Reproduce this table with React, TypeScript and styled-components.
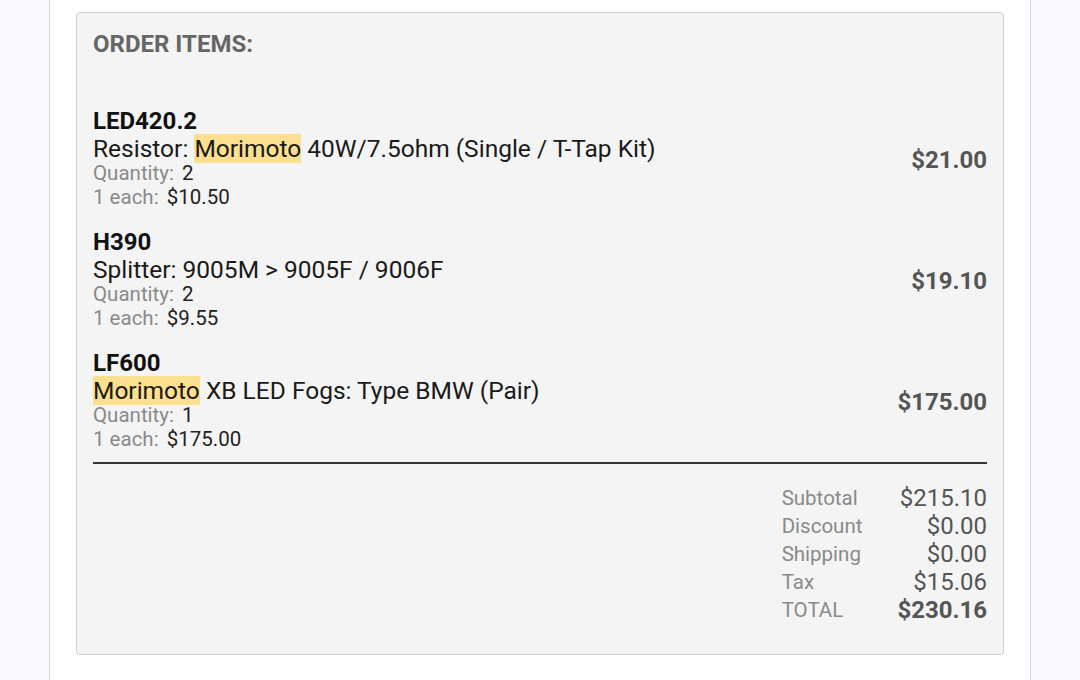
import styled, { createGlobalStyle } from "styled-components";

type Item = {
  sku: string;
  name: (string | { mark: string })[];
  quantity: number;
  each: string;
  total: string;
};

const items: Item[] = [
  {
    sku: "LED420.2",
    name: ["Resistor: ", { mark: "Morimoto" }, " 40W/7.5ohm (Single / T-Tap Kit)"],
    quantity: 2,
    each: "$10.50",
    total: "$21.00",
  },
  {
    sku: "H390",
    name: ["Splitter: 9005M > 9005F / 9006F"],
    quantity: 2,
    each: "$9.55",
    total: "$19.10",
  },
  {
    sku: "LF600",
    name: [{ mark: "Morimoto" }, " XB LED Fogs: Type BMW (Pair)"],
    quantity: 1,
    each: "$175.00",
    total: "$175.00",
  },
];

const totals = [
  { label: "Subtotal", value: "$215.10" },
  { label: "Discount", value: "$0.00" },
  { label: "Shipping", value: "$0.00" },
  { label: "Tax", value: "$15.06" },
  { label: "TOTAL", value: "$230.16", strong: true },
];

const App = () => {
  return (
    <>
      <GlobalStyle />
      <Page>
        <Column>
          <Card>
            <Heading>ORDER ITEMS:</Heading>
            <ItemList>
              {items.map((item) => (
                <ItemRow key={item.sku}>
                  <div>
                    <Sku>{item.sku}</Sku>
                    <Name>
                      {item.name.map((part, i) =>
                        typeof part === "string" ? (
                          part
                        ) : (
                          <Mark key={i}>{part.mark}</Mark>
                        )
                      )}
                    </Name>
                    <Meta>
                      <MetaLabel>Quantity:</MetaLabel> {item.quantity}
                    </Meta>
                    <Meta>
                      <MetaLabel>1 each:</MetaLabel> {item.each}
                    </Meta>
                  </div>
                  <Price>{item.total}</Price>
                </ItemRow>
              ))}
            </ItemList>
            <Divider />
            <Totals>
              {totals.map((t) => (
                <TotalLine key={t.label}>
                  <TotalLabel>{t.label}</TotalLabel>
                  <TotalValue $strong={t.strong}>{t.value}</TotalValue>
                </TotalLine>
              ))}
            </Totals>
          </Card>
        </Column>
      </Page>
    </>
  );
};

const GlobalStyle = createGlobalStyle`
  html, body {
    margin: 0;
    padding: 0;
    background: #f9f9fd;
    font-family: Roboto, "Liberation Sans", sans-serif;
  }
`;

const Page = styled.div`
  display: flex;
  justify-content: flex-start;
  min-height: 680px;
  padding-left: 49px;
`;

const Column = styled.div`
  width: 982px;
  min-height: 680px;
  background: #ffffff;
  border-left: 1px solid #d6d6d6;
  border-right: 1px solid #d6d6d6;
  padding: 12px 26px 24px 26px;
  box-sizing: border-box;
`;

const Card = styled.div`
  background: #f4f4f4;
  border: 1px solid #cfcfcf;
  border-radius: 4px;
  padding: 17px 16px 30px 16px;
`;

const Heading = styled.div`
  font-size: 24px;
  font-weight: 700;
  color: #666666;
  line-height: 28px;
  margin-bottom: 48px;
`;

const ItemList = styled.div`
  display: flex;
  flex-direction: column;
  gap: 18px;
`;

const ItemRow = styled.div`
  display: grid;
  grid-template-columns: 1fr auto;
  align-items: center;
`;

const Sku = styled.div`
  font-size: 24px;
  font-weight: 700;
  color: #111111;
  line-height: 30px;
`;

const Name = styled.div`
  font-size: 24.5px;
  color: #1a1a1a;
  line-height: 25px;
`;

const Mark = styled.span`
  background: #fde08f;
`;

const Meta = styled.div`
  font-size: 20.5px;
  color: #222222;
  line-height: 24px;
`;

const MetaLabel = styled.span`
  color: #8a8a8a;
  margin-right: 3px;
`;

const Price = styled.div`
  font-size: 24px;
  font-weight: 700;
  color: #555555;
  padding-top: 4px;
`;

const Divider = styled.hr`
  border: none;
  border-top: 2px solid #333333;
  margin: 11px 0 20px 0;
`;

const Totals = styled.div`
  display: grid;
  grid-template-columns: auto auto;
  justify-content: end;
  column-gap: 35px;
`;

const TotalLine = styled.div`
  display: contents;
`;

const TotalLabel = styled.div`
  font-size: 20.5px;
  color: #8a8a8a;
  line-height: 28px;
`;

const TotalValue = styled.div<{ $strong?: boolean }>`
  font-size: 24px;
  text-align: right;
  color: #555555;
  line-height: 28px;
  font-weight: ${(p) => (p.$strong ? 700 : 400)};
`;

export default App;
